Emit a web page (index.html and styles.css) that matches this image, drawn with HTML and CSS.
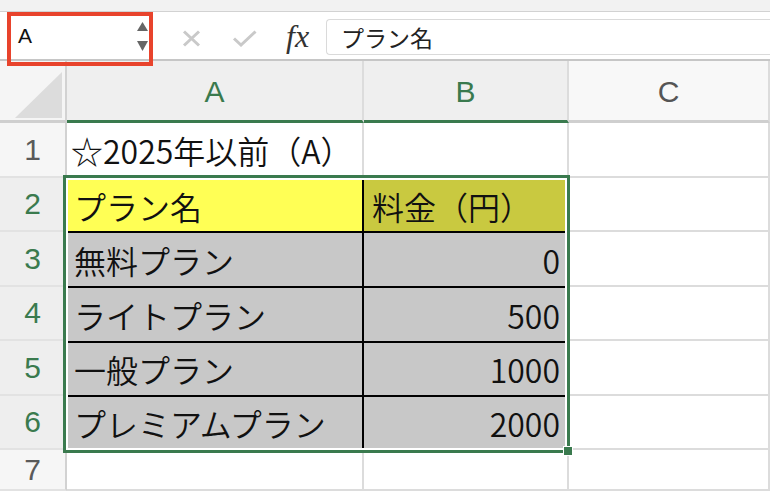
FILE: index.html
```html
<!DOCTYPE html>
<html lang="ja">
<head>
<meta charset="utf-8">
<title>Sheet</title>
<link rel="stylesheet" href="styles.css">
</head>
<body>
<div class="app">
  <div class="topstrip"></div>
  <div class="formulabar">
    <div class="namebox">
      <span class="namebox-text">A</span>
      <svg class="spinner" width="11" height="29" viewBox="0 0 11 29"><polygon points="0,9 5.5,0 11,9" fill="#666"/><polygon points="0,19 11,19 5.5,29" fill="#666"/></svg>
      <div class="highlight"></div>
    </div>
    <svg class="icon-x" width="19" height="17" viewBox="0 0 19 17"><path d="M2 1.5 L17 15.5 M17 1.5 L2 15.5" stroke="#c9c9c9" stroke-width="3" fill="none"/></svg>
    <svg class="icon-check" width="25" height="17" viewBox="0 0 25 17"><polyline points="2,8.5 9,15 23.5,1.5" stroke="#c9c9c9" stroke-width="3" fill="none"/></svg>
    <span class="fx">fx</span>
    <div class="formula-input">プラン名</div>
  </div>
  <div class="sheet">
    <div class="corner"><svg width="47" height="46" viewBox="0 0 47 46"><polygon points="0,46 47,0 47,46" fill="#dcdcdc"/></svg></div>
    <div class="colhead sel">A</div>
    <div class="colhead sel">B</div>
    <div class="colhead">C</div>

    <div class="rowhead">1</div>
    <div class="cell text">☆2025年以前（A）</div>
    <div class="cell"></div>
    <div class="cell"></div>

    <div class="rowhead sel">2</div>
    <div class="cell"></div>
    <div class="rowhead sel">3</div>
    <div class="cell"></div>
    <div class="rowhead sel">4</div>
    <div class="cell"></div>
    <div class="rowhead sel">5</div>
    <div class="cell"></div>
    <div class="rowhead sel">6</div>
    <div class="cell"></div>

    <div class="rowhead">7</div>
    <div class="cell"></div>
    <div class="cell"></div>
    <div class="cell"></div>

    <div class="table">
      <div class="tgrid">
        <div class="tcell yellow">プラン名</div>
        <div class="tcell olive">料金（円）</div>
        <div class="tcell gray">無料プラン</div>
        <div class="tcell gray num">0</div>
        <div class="tcell gray">ライトプラン</div>
        <div class="tcell gray num">500</div>
        <div class="tcell gray">一般プラン</div>
        <div class="tcell gray num">1000</div>
        <div class="tcell gray">プレミアムプラン</div>
        <div class="tcell gray num">2000</div>
      </div>
      <div class="handle"></div>
    </div>
  </div>
</div>
</body>
</html>
```

FILE: styles.css
```css
* { box-sizing: border-box; }
html, body { margin: 0; padding: 0; }
body {
  width: 770px;
  height: 491px;
  overflow: hidden;
  background: #ffffff;
  font-family: "Liberation Sans", "Noto Sans CJK JP", sans-serif;
}
.app { display: flex; flex-direction: column; height: 491px; }

.topstrip {
  height: 12px;
  background: #f2f2f2;
  border-bottom: 1px solid #d2d2d2;
  flex: none;
}

.formulabar {
  flex: none;
  height: 49px;
  background: #ffffff;
  border-bottom: 2px solid #c6c6c6;
  display: flex;
  align-items: center;
}

.namebox {
  position: relative;
  margin-left: 11px;
  width: 138px;
  height: 47px;
  display: flex;
  align-items: center;
  justify-content: space-between;
  padding: 1px 1px 0 7px;
  background: #ffffff;
}
.namebox-text {
  font-family: "Liberation Sans", sans-serif;
  font-size: 21px;
  color: #111;
}
.highlight {
  position: absolute;
  left: -4px;
  top: 0;
  right: -4px;
  bottom: -7px;
  border: 4px solid #e8432c;
  z-index: 5;
}

.icon-x { margin-left: 33px; margin-top: 6px; flex: none; }
.icon-check { margin-left: 31px; margin-top: 6px; flex: none; }
.fx {
  margin-left: 29px;
  margin-top: 2px;
  font-family: "Liberation Serif", serif;
  font-style: italic;
  font-size: 32px;
  color: #333;
  width: 26px;
}
.formula-input {
  align-self: flex-start;
  margin-top: 7px;
  margin-left: 14px;
  flex: 1;
  height: 36px;
  border-top: 1px solid #dadada;
  border-left: 1px solid #dadada;
  border-bottom: 1px solid #dadada;
  border-top-left-radius: 4px;
  border-bottom-left-radius: 4px;
  padding-left: 14px;
  display: flex;
  align-items: center;
  font-family: "Noto Sans CJK JP", sans-serif;
  font-size: 23px;
  color: #222;
}

.sheet {
  flex: 1;
  display: grid;
  grid-template-columns: 67px 297px 205px 1fr;
  grid-template-rows: 62px 55px 54px 55px 54px 55px 54px 1fr;
  overflow: hidden;
}

.corner, .colhead, .rowhead, .cell {
  border-right: 2px solid #dcdcdc;
  border-bottom: 2px solid #dcdcdc;
}

.corner {
  background: #f5f5f5;
  border-bottom: 3px solid #cfcfcf;
  border-right-color: #d2d2d2;
  display: flex;
  align-items: flex-end;
  justify-content: flex-end;
  padding: 0 3px 2px 0;
}
.colhead {
  background: #f8f8f8;
  border-bottom: 3px solid #cfcfcf;
  display: flex;
  align-items: center;
  justify-content: center;
  font-size: 30px;
  color: #555;
  padding-top: 2px;
}
.colhead.sel {
  background: #efefef;
  color: #3a7a4e;
  border-bottom-color: #3a7a4e;
}
.rowhead {
  background: #f6f6f6;
  border-right-color: #d2d2d2;
  border-bottom-color: #e2e2e2;
  display: flex;
  align-items: center;
  justify-content: center;
  font-size: 30px;
  color: #5a5a5a;
}
.rowhead.sel {
  background: #eeeeee;
  color: #3a7a4e;
}
.cell {
  background: #ffffff;
}
.cell.text {
  display: flex;
  align-items: center;
  padding-left: 4px;
  font-family: "Noto Sans CJK JP", sans-serif;
  font-weight: 350;
  font-size: 32px;
  color: #111;
  white-space: nowrap;
}

.table {
  grid-row: 3 / 8;
  grid-column: 2 / 4;
  margin: -3px -1px -3px -4px;
  z-index: 3;
  position: relative;
  border: 3px solid #3a7a4e;
  padding: 2px;
  background: #ffffff;
  display: flex;
}
.tgrid {
  flex: 1;
  display: grid;
  grid-template-columns: 294px 1fr;
  grid-template-rows: 51px 53px 53px 52px 1fr;
  gap: 2px;
  background: #000;
}
.tcell {
  display: flex;
  align-items: center;
  padding: 0 5px 0 6px;
  font-family: "Noto Sans CJK JP", sans-serif;
  font-weight: 350;
  font-size: 32px;
  color: #111;
  white-space: nowrap;
}
.tcell.num { justify-content: flex-end; padding-right: 5px; }
.yellow { background: #ffff55; }
.olive { background: #c9c940; padding-left: 8px; }
.gray { background: #c8c8c8; }

.handle {
  position: absolute;
  right: -6px;
  bottom: -6px;
  width: 10px;
  height: 10px;
  background: #3a7a4e;
  border: 1px solid #ffffff;
}
```
